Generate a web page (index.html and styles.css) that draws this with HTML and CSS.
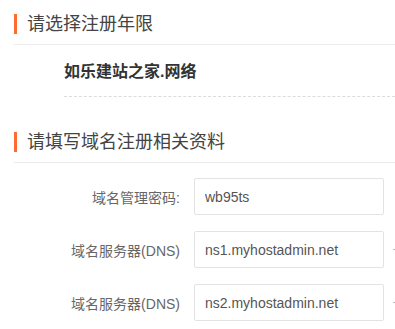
FILE: index.html
```html
<!DOCTYPE html>
<html lang="zh-CN">
<head>
<meta charset="utf-8">
<title>域名注册</title>
<link rel="stylesheet" href="styles.css">
</head>
<body>
<div class="page">
  <h2 class="sec-title"><span class="sec-label">请选择注册年限</span></h2>
  <div class="domain-row">如乐建站之家.网络</div>

  <h2 class="sec-title sec-second"><span class="sec-label">请填写域名注册相关资料</span></h2>
  <div class="form">
    <div class="form-row">
      <label class="form-label">域名管理密码:</label>
      <input class="form-input" type="text" value="wb95ts">
    </div>
    <div class="form-row">
      <label class="form-label">域名服务器(DNS)</label>
      <input class="form-input" type="text" value="ns1.myhostadmin.net">
      <span class="form-tip"></span>
    </div>
    <div class="form-row">
      <label class="form-label">域名服务器(DNS)</label>
      <input class="form-input" type="text" value="ns2.myhostadmin.net">
      <span class="form-tip"></span>
    </div>
  </div>
</div>
</body>
</html>
```

FILE: styles.css
```css
html, body {
  margin: 0;
  padding: 0;
  background: #fff;
  overflow: hidden;
}

body {
  font-family: "Liberation Sans", "Noto Sans CJK SC", sans-serif;
  color: #555;
  width: 395px;
  height: 329px;
}

.page {
  padding-left: 14px;
}

.sec-title {
  margin: 0;
  padding-top: 14px;
  padding-bottom: 10px;
  border-bottom: 1px solid #ececec;
  font-size: 18px;
  font-weight: normal;
  line-height: 20px;
  color: #444;
}

.sec-second {
  margin-top: 21px;
}

.sec-label {
  display: block;
  border-left: 3px solid #ff6a33;
  padding-left: 10px;
}

.domain-row {
  margin-left: 50px;
  padding-top: 15px;
  padding-bottom: 12px;
  border-bottom: 1px dashed #dcdcdc;
  font-size: 16px;
  font-weight: bold;
  line-height: 24px;
  color: #333;
}

.form {
  padding-top: 15px;
}

.form-row {
  display: flex;
  align-items: center;
  margin-bottom: 16px;
  white-space: nowrap;
}

.form-label {
  width: 166px;
  flex: none;
  text-align: right;
  margin-right: 14px;
  font-size: 14px;
  color: #666;
}

.form-input {
  box-sizing: border-box;
  flex: none;
  width: 190px;
  height: 37px;
  margin: 0;
  padding: 0 10px;
  border: 1px solid #e3e3e3;
  border-radius: 2px;
  font-family: "Liberation Sans", "Noto Sans CJK SC", sans-serif;
  font-size: 14px;
  color: #555;
  outline: none;
}

.form-tip {
  flex: none;
  width: 3px;
  height: 1px;
  margin-left: 9px;
  background: #bbb;
}
```
